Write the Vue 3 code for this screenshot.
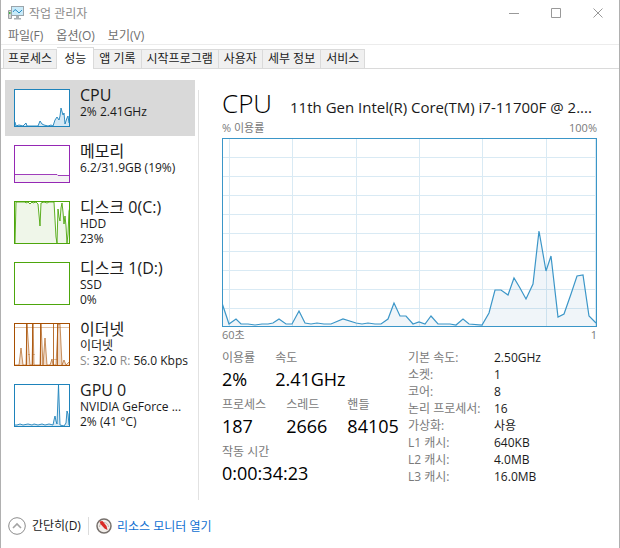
<script setup>
import { ref } from 'vue'

const menus = ['파일(F)', '옵션(O)', '보기(V)']
const tabs = ['프로세스', '성능', '앱 기록', '시작프로그램', '사용자', '세부 정보', '서비스']
const activeTab = ref('성능')
const selected = ref('cpu')

const devices = [
  {
    id: 'cpu', name: 'CPU', lines: ['2% 2.41GHz'], color: '#1e83bb', fill: '#d5e8f4', h: 38,
    paths: [{ d: 'M1 33L2 37L5 36L9 37L12 34L13 37L20 37L24 37L26 32L28 35L30 36L34 37L37 36L39 37L41 31L43 28L45 31L46 27L47 19L49 26L50 24L51 35L53 29L54 27L55 34' }],
  },
  {
    id: 'memory', name: '메모리', lines: ['6.2/31.9GB (19%)'], color: '#9528b4', fill: '#f4f2f4', h: 38,
    paths: [{ d: 'M0 29.5L43 29.5L44 30.5L56 30.5' }],
  },
  {
    id: 'disk0', name: '디스크 0(C:)', lines: ['HDD', '23%'], color: '#4da60c', fill: '#eff6e9', h: 43,
    paths: [{ d: 'M1 43L2 1L11 1L12 2L14 1L16 3L18 1L19 2L22 1L24 3L26 25L27 2L30 1L33 2L35 1L40 1L42 36L43 42L44 8L45 16L46 20L47 7L48 2L49 11L50 23L51 15L52 25L53 42L54 33L55 10L56 6' }],
  },
  { id: 'disk1', name: '디스크 1(D:)', lines: ['SSD', '0%'], color: '#4da60c', fill: '#eff6e9', h: 43, paths: [] },
  {
    id: 'net', name: '이더넷', lines: ['이더넷'], send: '32.0', receive: '56.0 Kbps', color: '#a74f01', fill: '#f0dccb', h: 43,
    paths: [
      { d: 'M1 42L5 42L7 25L9 42L12 42L13 1L15 30L16 42L18 42L19 1L20 42L26 42L27 1L29 42L31 15L33 42L36 42L38 36L39 42L42 42L44 1L46 1L48 42L50 37L52 42L56 38', opacity: 0.6 },
      { d: 'M12.500 1V42M18.500 1V42M26.500 1V42M39.500 1V42M43.500 1V42', opacity: 0.8 },
      { d: 'M1 4.500H55M14 31.500H16M19 31.500H21M40 36.500H43', opacity: 0.35 },
    ],
  },
  {
    id: 'gpu', name: 'GPU 0', lines: ['NVIDIA GeForce ...', '2% (41 °C)'], color: '#1e83bb', fill: '#d5e8f4', h: 43,
    paths: [{ d: 'M0 41L3 41L6 40L9 41L14 40L18 41L20 40L24 41L28 40L31 41L35 40L39 41L40 36L41 32L42 37L43 40L44.500 1L46 41L50 42L52 39L53 27L54 30L55 41' }],
  },
]

const usage = [
  [0, 165], [7, 186], [14, 181], [19, 186], [26, 186], [33, 187], [40, 186], [46, 186], [51, 185], [57, 181],
  [64, 186], [70, 186], [77, 173], [83, 185], [89, 186], [95, 185], [102, 186], [109, 186], [121, 181],
  [134, 185], [140, 186], [146, 185], [153, 186], [159, 186], [166, 181], [172, 165], [178, 178], [184, 178],
  [191, 186], [197, 184], [203, 186], [209, 178], [216, 186], [228, 186], [234, 187], [241, 181], [247, 186],
  [260, 187], [267, 175], [273, 152], [279, 152], [286, 157], [292, 140], [298, 150], [304, 161], [311, 146],
  [317, 93], [324, 133], [329, 118], [336, 179], [342, 176], [349, 156], [355, 138], [361, 137], [367, 178], [374, 185],
]
const usageLine = usage.map(p => p.join(',')).join(' ')
const usageArea = `0,188 ${usageLine} 374,188`
const columns = [7, 70, 134, 197, 260, 324, 373]
const rows = [19, 38, 57, 76, 95, 113, 132, 151, 170]

const stats = [
  [['이용률', '2%'], ['속도', '2.41GHz']],
  [['프로세스', '187'], ['스레드', '2666'], ['핸들', '84105']],
  [['작동 시간', '0:00:34:23']],
]
const specs = [
  ['기본 속도:', '2.50GHz'], ['소켓:', '1'], ['코어:', '8'], ['논리 프로세서:', '16'],
  ['가상화:', '사용'], ['L1 캐시:', '640KB'], ['L2 캐시:', '4.0MB'], ['L3 캐시:', '16.0MB'],
]
</script>

<template>
  <div class="window">
    <header class="titlebar">
      <svg class="app-icon" width="16" height="14" viewBox="0 0 16 14" aria-hidden="true">
        <path d="M0.5 4.5h3v8h-3z" fill="#d8d8d8" stroke="#9b9fa2" />
        <path d="M1 6h1.500v2H1z" fill="#42b649" />
        <rect x="3.500" y="0.500" width="12" height="9" fill="#c9ebfa" stroke="#9ba5ab" />
        <path d="M5 6l2-2.500 2 1.500 2 2 3-3" fill="none" stroke="#2d8fc5" />
        <path d="M8 10h3v2h2v1.500H6V12h2z" fill="#a9b0b4" />
      </svg>
      <h1>작업 관리자</h1>
      <div class="controls">
        <button aria-label="최소화"><svg width="10" height="10" viewBox="0 0 10 10"><path d="M0 5.500h10" /></svg></button>
        <button aria-label="최대화"><svg width="10" height="10" viewBox="0 0 10 10"><path d="M0.500 0.500h9v9h-9z" /></svg></button>
        <button aria-label="닫기"><svg width="10" height="10" viewBox="0 0 10 10"><path d="M0.500 0.500l9 9M9.500 0.500l-9 9" /></svg></button>
      </div>
    </header>

    <nav class="menubar">
      <button v-for="m in menus" :key="m">{{ m }}</button>
    </nav>

    <div class="tabs" role="tablist">
      <button
        v-for="t in tabs" :key="t" role="tab" :aria-selected="activeTab === t"
        :class="{ active: activeTab === t }" @click="activeTab = t"
      >{{ t }}</button>
    </div>

    <div class="content">
      <aside class="devices">
        <button
          v-for="d in devices" :key="d.id" class="device"
          :class="{ selected: selected === d.id }" @click="selected = d.id"
        >
          <svg class="thumb" width="56" :height="d.h" :viewBox="`0 0 56 ${d.h}`" aria-hidden="true">
            <rect width="56" :height="d.h" fill="#fff" />
            <template v-for="(p, i) in d.paths" :key="i">
              <path v-if="i === 0" :d="`${p.d}L56 ${d.h}L0 ${d.h}Z`" :fill="d.fill" />
              <path :d="p.d" fill="none" :stroke="d.color" :opacity="p.opacity || 0.9" />
            </template>
            <rect x="0.5" y="0.5" width="55" :height="d.h - 1" fill="none" :stroke="d.color" />
          </svg>
          <span class="info">
            <span class="name">{{ d.name }}</span>
            <span v-for="l in d.lines" :key="l" class="line">{{ l }}</span>
            <span v-if="d.send" class="line"><i>S:</i> {{ d.send }} <i>R:</i> {{ d.receive }}</span>
          </span>
        </button>
      </aside>

      <main class="detail">
        <div class="heading">
          <h2>CPU</h2>
          <p>11th Gen Intel(R) Core(TM) i7-11700F @ 2....</p>
        </div>
        <div class="scale"><span>% 이용률</span><span>100%</span></div>
        <svg class="chart" viewBox="0 0 375 189" preserveAspectRatio="none" role="img" aria-label="% 이용률">
          <g stroke="#d9eaf4">
            <line v-for="x in columns" :key="'c' + x" :x1="x + 0.5" :x2="x + 0.5" y1="0" y2="189" />
            <line v-for="y in rows" :key="'r' + y" :y1="y + 0.5" :y2="y + 0.5" x1="0" x2="375" />
          </g>
          <polygon :points="usageArea" fill="#2a76b0" fill-opacity="0.07" />
          <polyline :points="usageLine" fill="none" stroke="#3b96c8" stroke-width="1.2" />
          <rect x="0.5" y="0.5" width="374" height="188" fill="none" stroke="#3b96c8" />
        </svg>
        <div class="scale bottom"><span>60초</span><span>1</span></div>

        <div class="figures">
          <div class="stats">
            <dl v-for="(row, i) in stats" :key="i" class="stat-row">
              <div v-for="[label, value] in row" :key="label">
                <dt>{{ label }}</dt>
                <dd>{{ value }}</dd>
              </div>
            </dl>
          </div>
          <table class="specs">
            <tbody>
              <tr v-for="[label, value] in specs" :key="label">
                <th scope="row">{{ label }}</th>
                <td>{{ value }}</td>
              </tr>
            </tbody>
          </table>
        </div>
      </main>
    </div>

    <footer class="footer">
      <button class="fewer">
        <svg width="18" height="18" viewBox="0 0 18 18" aria-hidden="true">
          <circle cx="9" cy="9" r="8.300" fill="#fff" stroke="#8c8c8c" />
          <path d="M5 11l4-4 4 4" fill="none" stroke="#a3a3a3" stroke-width="1.600" />
        </svg>
        간단히(D)
      </button>
      <a href="#">
        <svg width="16" height="16" viewBox="0 0 16 16" aria-hidden="true">
          <circle cx="8" cy="8" r="7" fill="#f1ede9" stroke="#77716d" stroke-width="1.500" />
          <path d="M3.500 9a4.500 4.500 0 0 1 9 0" fill="none" stroke="#c3b8b2" />
          <path d="M3.500 3.500l3-0.500 4 5 1 4-3-1.500-4-4.500z" fill="#d92a25" />
        </svg>
        리소스 모니터 열기
      </a>
    </footer>
  </div>
</template>

<style>
body {
  margin: 0;
  background: #fff;
}
</style>

<style scoped>
.window {
  box-sizing: border-box;
  min-height: 100vh;
  display: flex;
  flex-direction: column;
  border: solid #b0b0b0;
  border-width: 0 1px;
  background: #fff;
  color: #1a1a1a;
  font: 12px/15px "Open Sans", "Noto Sans CJK KR", sans-serif;
  white-space: nowrap;
}
h1, h2, p, dl, dd {
  margin: 0;
  font-weight: 400;
}
button {
  padding: 0;
  border: 0;
  background: none;
  color: inherit;
  font: inherit;
  text-align: left;
}
.titlebar {
  display: flex;
  align-items: center;
  height: 26px;
  padding-left: 7px;
  color: #8c8c8c;
}
.app-icon {
  margin-right: 5px;
}
h1 {
  font-size: 12px;
}
.controls {
  display: flex;
  margin-left: auto;
}
.controls button {
  display: flex;
  justify-content: center;
  width: 42px;
}
.controls path {
  fill: none;
  stroke: #999;
}
.menubar {
  display: flex;
  gap: 13px;
  height: 18px;
  padding: 0 7px;
  border-bottom: 1px solid #ececec;
  color: #6e6e6e;
  line-height: 20px;
}
.tabs {
  display: flex;
  align-items: flex-end;
  height: 23px;
  padding-left: 2px;
  border-bottom: 1px solid #dadada;
}
.tabs button {
  height: 19px;
  padding: 0 5px;
  border: 1px solid #dadada;
  border-width: 1px 1px 0 0;
  background: #f0f0f0;
  line-height: 18px;
}
.tabs button:first-child {
  border-left-width: 1px;
  padding: 0 4px;
}
.tabs .active {
  height: 22px;
  margin-bottom: -1px;
  padding: 0 7px;
  background: #fff;
}
.content {
  display: flex;
  align-items: flex-start;
  gap: 3px;
  padding: 11px 22px 0 4px;
}
.devices {
  flex: none;
  display: flex;
  flex-direction: column;
  width: 190px;
}
.device {
  display: flex;
  gap: 10px;
  padding: 0 9px;
}
.selected {
  background: #d9d9d9;
}
.thumb {
  flex: none;
  margin: 9px 0;
}
.info {
  display: flex;
  flex-direction: column;
  padding-top: 6px;
}
.name {
  font-size: 16px;
  line-height: 18px;
}
.line i {
  color: #8a8a8a;
  font-style: normal;
}
.detail {
  flex: 1;
  min-width: 0;
  padding-left: 23px;
  border-left: 1px solid #e2e2e2;
  min-height: 410px;
  margin-top: 10px;
}
.heading {
  display: flex;
  align-items: baseline;
  gap: 18px;
  height: 30px;
}
h2 {
  font-size: 26px;
  font-weight: 300;
  line-height: 26px;
  color: #000;
}
.heading p {
  font-size: 15px;
}
.scale {
  display: flex;
  justify-content: space-between;
  height: 18px;
  color: #7a7a7a;
  font-size: 11px;
}
.chart {
  display: block;
  width: 100%;
  height: 189px;
}
.bottom {
  height: 22px;
}
.figures {
  display: grid;
  grid-template-columns: 186px 1fr;
  align-items: start;
}
.stat-row {
  display: flex;
  gap: 20px;
  height: 47px;
}
dt {
  color: #7a7a7a;
  line-height: 17px;
}
dd {
  color: #000;
  font-size: 18px;
  line-height: 27px;
}
.specs {
  width: 100%;
  table-layout: fixed;
  border-collapse: collapse;
}
.specs th,
.specs td {
  padding: 0;
  font-size: 12px;
  font-weight: 400;
  line-height: 17px;
  text-align: left;
}
.specs th {
  width: 86px;
  color: #7a7a7a;
}
.footer {
  display: flex;
  align-items: center;
  margin-top: auto;
  padding: 0 7px 13px;
}
.fewer,
.footer a {
  display: flex;
  align-items: center;
  gap: 6px;
}
.fewer {
  padding-right: 7px;
  border-right: 1px solid #dcdcdc;
  line-height: 18px;
}
.footer a {
  gap: 5px;
  padding-left: 7px;
  color: #0f6fd1;
  text-decoration: none;
}
</style>
